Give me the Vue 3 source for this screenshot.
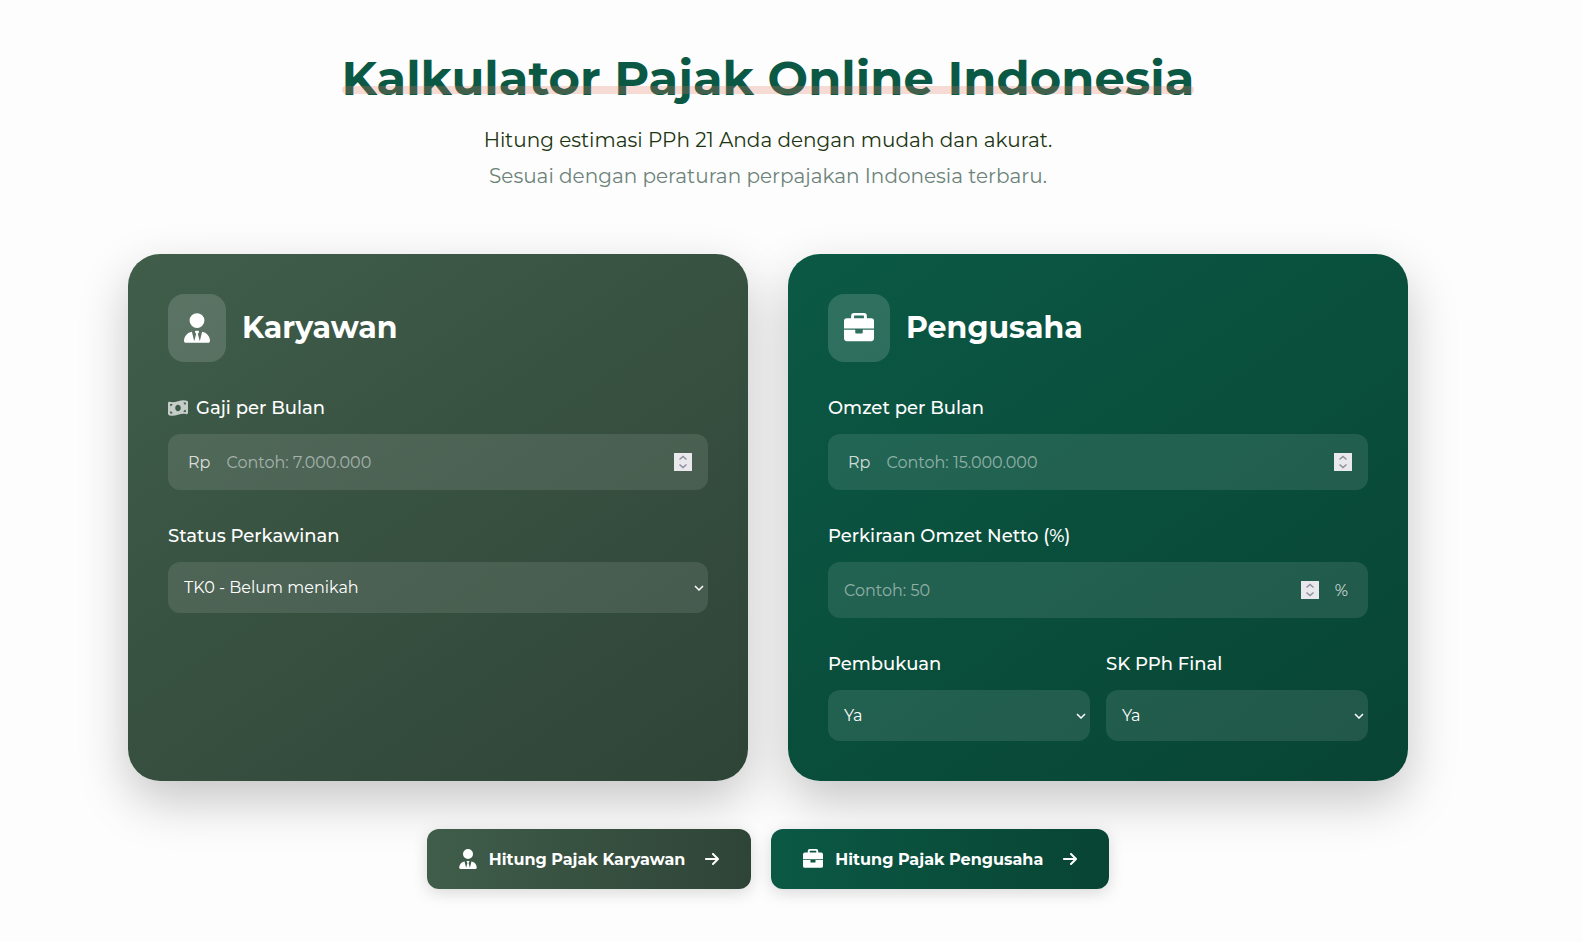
<script setup>
import { ref } from 'vue'

const salary = ref('')
const status = ref('TK0')
const revenue = ref('')
const netPercent = ref('')
const bookkeeping = ref('ya')
const finalLetter = ref('ya')

const statuses = [
  { value: 'TK0', label: 'TK0 - Belum menikah' },
  { value: 'K0', label: 'K0 - Menikah' },
]

const icons = {
  tie: {
    box: '0 0 448 512',
    d: 'M224 256A128 128 0 1 0 224 0a128 128 0 1 0 0 256zM209.1 359.2l-18.6-31c-6.4-10.7 1.3-24.2 13.7-24.2H224h19.7c12.4 0 20.1 13.6 13.7 24.2l-18.6 31 33.4 123.9 39.5-161.2c77.2 12 136.3 78.8 136.3 159.4c0 17-13.8 30.7-30.7 30.7H265.1 182.9 30.7C13.8 512 0 498.2 0 481.3c0-80.6 59.1-147.4 136.3-159.4l39.5 161.2 33.4-123.9z',
  },
  briefcase: {
    box: '0 0 512 512',
    d: 'M170 0H342a48 48 0 0 1 48 48V90H464a48 48 0 0 1 48 48V264H0V138a48 48 0 0 1 48-48H122V48a48 48 0 0 1 48-48zM180 42a8 8 0 0 0-8 8V90H340V50a8 8 0 0 0-8-8zM0 284H192V332a16 16 0 0 0 16 16H304a16 16 0 0 0 16-16V284H512V432a48 48 0 0 1-48 48H48a48 48 0 0 1-48-48z',
  },
  money: {
    box: '0 0 576 512',
    d: 'M0 112.5V422.3c0 18 10.1 35 27 41.3c87 32.5 174 10.3 261-11.9c79.8-20.3 159.6-40.7 239.3-18.9c23 6.3 48.7-9.5 48.7-33.4V89.7c0-18-10.1-35-27-41.3C462 15.9 375 38.1 288 60.3C208.2 80.6 128.4 100.9 48.7 79.1C25.6 72.8 0 88.6 0 112.5zM288 352c-44.2 0-80-43-80-96s35.8-96 80-96s80 43 80 96s-35.8 96-80 96zM64 352c35.3 0 64 28.7 64 64H64V352zm64-208c0 35.3-28.7 64-64 64V144h64zM512 304v64H448c0-35.3 28.7-64 64-64zM448 96h64v64c-35.3 0-64-28.7-64-64z',
  },
  arrow: {
    box: '0 0 448 512',
    d: 'M438.6 278.6c12.5-12.5 12.5-32.8 0-45.3l-160-160c-12.5-12.5-32.8-12.5-45.3 0s-12.5 32.8 0 45.3L338.8 224 32 224c-17.7 0-32 14.3-32 32s14.3 32 32 32l306.7 0L233.4 393.4c-12.5 12.5-12.5 32.8 0 45.3s32.8 12.5 45.3 0l160-160z',
  },
}

const step = (value, amount) => Math.max(0, Number(value || 0) + amount)
</script>

<template>
  <main class="page">
    <header class="intro">
      <h1><span class="marked">Kalkulator Pajak Online Indonesia</span></h1>
      <p class="lead">Hitung estimasi PPh 21 Anda dengan mudah dan akurat.</p>
      <p class="lead note">Sesuai dengan peraturan perpajakan Indonesia terbaru.</p>
    </header>

    <div class="cards">
      <section class="card employee">
        <div class="card-head">
          <span class="badge">
            <svg class="badge-icon tie" :viewBox="icons.tie.box" aria-hidden="true"><path :d="icons.tie.d" /></svg>
          </span>
          <h2>Karyawan</h2>
        </div>
        <div class="field">
          <label for="salary">
            <svg class="money" :viewBox="icons.money.box" aria-hidden="true"><path :d="icons.money.d" /></svg>
            Gaji per Bulan
          </label>
          <div class="box">
            <span class="unit">Rp</span>
            <input id="salary" v-model="salary" type="number" placeholder="Contoh: 7.000.000" />
            <span class="spinner">
              <button type="button" aria-label="Tambah gaji" @click="salary = step(salary, 1)">
                <svg viewBox="0 0 18 9"><path d="M5.5 6.5L9 3.5L12.5 6.5" /></svg>
              </button>
              <button type="button" aria-label="Kurangi gaji" @click="salary = step(salary, -1)">
                <svg viewBox="0 0 18 9"><path d="M5.5 2.5L9 5.5L12.5 2.5" /></svg>
              </button>
            </span>
          </div>
        </div>
        <div class="field">
          <label for="status">Status Perkawinan</label>
          <div class="choice">
            <select id="status" v-model="status">
              <option v-for="s in statuses" :key="s.value" :value="s.value">{{ s.label }}</option>
            </select>
            <svg class="caret" viewBox="0 0 10 6" aria-hidden="true"><path d="M1 1L5 5L9 1" /></svg>
          </div>
        </div>
      </section>

      <section class="card business">
        <div class="card-head">
          <span class="badge">
            <svg class="badge-icon" :viewBox="icons.briefcase.box" aria-hidden="true"><path :d="icons.briefcase.d" /></svg>
          </span>
          <h2>Pengusaha</h2>
        </div>
        <div class="field">
          <label for="revenue">Omzet per Bulan</label>
          <div class="box">
            <span class="unit">Rp</span>
            <input id="revenue" v-model="revenue" type="number" placeholder="Contoh: 15.000.000" />
            <span class="spinner">
              <button type="button" aria-label="Tambah omzet" @click="revenue = step(revenue, 1)">
                <svg viewBox="0 0 18 9"><path d="M5.5 6.5L9 3.5L12.5 6.5" /></svg>
              </button>
              <button type="button" aria-label="Kurangi omzet" @click="revenue = step(revenue, -1)">
                <svg viewBox="0 0 18 9"><path d="M5.5 2.5L9 5.5L12.5 2.5" /></svg>
              </button>
            </span>
          </div>
        </div>
        <div class="field">
          <label for="net">Perkiraan Omzet Netto (%)</label>
          <div class="box">
            <input id="net" v-model="netPercent" type="number" placeholder="Contoh: 50" />
            <span class="spinner">
              <button type="button" aria-label="Tambah persen" @click="netPercent = step(netPercent, 1)">
                <svg viewBox="0 0 18 9"><path d="M5.5 6.5L9 3.5L12.5 6.5" /></svg>
              </button>
              <button type="button" aria-label="Kurangi persen" @click="netPercent = step(netPercent, -1)">
                <svg viewBox="0 0 18 9"><path d="M5.5 2.5L9 5.5L12.5 2.5" /></svg>
              </button>
            </span>
            <span class="unit">%</span>
          </div>
        </div>
        <div class="pair">
          <div class="field">
            <label for="books">Pembukuan</label>
            <div class="choice">
              <select id="books" v-model="bookkeeping">
                <option value="ya">Ya</option>
                <option value="tidak">Tidak</option>
              </select>
              <svg class="caret" viewBox="0 0 10 6" aria-hidden="true"><path d="M1 1L5 5L9 1" /></svg>
            </div>
          </div>
          <div class="field">
            <label for="final">SK PPh Final</label>
            <div class="choice">
              <select id="final" v-model="finalLetter">
                <option value="ya">Ya</option>
                <option value="tidak">Tidak</option>
              </select>
              <svg class="caret" viewBox="0 0 10 6" aria-hidden="true"><path d="M1 1L5 5L9 1" /></svg>
            </div>
          </div>
        </div>
      </section>
    </div>

    <div class="actions">
      <button type="button" class="action employee">
        <svg class="action-icon tie" :viewBox="icons.tie.box" aria-hidden="true"><path :d="icons.tie.d" /></svg>
        <span>Hitung Pajak Karyawan</span>
        <svg class="arrow" :viewBox="icons.arrow.box" aria-hidden="true"><path :d="icons.arrow.d" /></svg>
      </button>
      <button type="button" class="action business">
        <svg class="action-icon" :viewBox="icons.briefcase.box" aria-hidden="true"><path :d="icons.briefcase.d" /></svg>
        <span>Hitung Pajak Pengusaha</span>
        <svg class="arrow" :viewBox="icons.arrow.box" aria-hidden="true"><path :d="icons.arrow.d" /></svg>
      </button>
    </div>
  </main>
</template>

<style>
body {
  background: #fdfdfd;
}
</style>

<style scoped>
.page {
  box-sizing: border-box;
  max-width: 1536px;
  padding: 48px 128px;
  font-family: Montserrat, Inter, "Open Sans", sans-serif;
  font-size: 16px;
  color: #fff;
}
.page * {
  box-sizing: border-box;
}
h1,
h2,
p {
  margin: 0;
}
svg {
  display: block;
  flex: none;
  fill: currentColor;
}
.intro {
  text-align: center;
  margin-bottom: 60px;
}
h1 {
  margin-bottom: 14px;
  font-size: 48px;
  line-height: 60px;
  font-weight: 700;
  color: #0b5945;
}
.marked {
  display: inline-block;
  position: relative;
}
.marked::after {
  content: "";
  position: absolute;
  left: 0;
  right: 0;
  bottom: 14px;
  height: 8px;
  border-radius: 4px;
  background: rgba(226, 114, 91, 0.25);
}
.lead {
  font-size: 20px;
  line-height: 36px;
  color: #1c3512;
}
.note {
  color: #6c8379;
}
.cards {
  display: grid;
  grid-template-columns: 1fr 1fr;
  gap: 40px;
}
.card {
  display: flex;
  flex-direction: column;
  gap: 32px;
  padding: 40px;
  border-radius: 32px;
  box-shadow: 0 20px 50px rgba(0, 0, 0, 0.22);
}
.card.employee {
  background: linear-gradient(145deg, #405d4a, #2e4437);
}
.card.business {
  background: linear-gradient(145deg, #0b5945, #084433);
}
.card-head {
  display: flex;
  align-items: center;
  gap: 16px;
}
.badge {
  display: flex;
  align-items: center;
  height: 68px;
  padding: 0 16px;
  border-radius: 16px;
  background: rgba(255, 255, 255, 0.15);
}
.badge-icon {
  width: 30px;
  height: 30px;
}
.badge-icon.tie {
  width: 26px;
}
h2 {
  font-size: 30px;
  line-height: 36px;
  font-weight: 700;
}
.field {
  display: flex;
  flex-direction: column;
  gap: 12px;
}
label {
  display: flex;
  align-items: center;
  gap: 8px;
  font-size: 18px;
  line-height: 28px;
  font-weight: 500;
}
.money {
  width: 20px;
  height: 18px;
  opacity: 0.7;
}
.box {
  display: flex;
  align-items: center;
  height: 56px;
  padding: 0 16px;
  border-radius: 12px;
  background: rgba(255, 255, 255, 0.1);
}
.unit {
  padding: 0 4px;
  color: rgba(255, 255, 255, 0.8);
}
.unit:first-child {
  margin-right: 12px;
}
.unit:last-child {
  margin-left: 12px;
}
input {
  flex: 1;
  min-width: 0;
  padding: 0;
  border: 0;
  outline: 0;
  background: none;
  font: inherit;
  color: #fff;
  appearance: textfield;
}
input::-webkit-inner-spin-button {
  display: none;
}
input::placeholder {
  color: rgba(255, 255, 255, 0.5);
}
.spinner {
  display: flex;
  flex-direction: column;
  background: #e8e8ed;
}
.spinner button {
  padding: 0;
  border: 0;
  background: none;
  color: #8f8f9d;
}
.spinner svg {
  width: 18px;
  height: 9px;
}
.spinner path,
.caret path {
  fill: none;
  stroke: currentColor;
  stroke-width: 1.5;
}
.choice {
  position: relative;
}
select {
  display: block;
  width: 100%;
  height: 51px;
  padding: 0 16px;
  border: 0;
  border-radius: 12px;
  appearance: none;
  background: rgba(255, 255, 255, 0.1);
  font: inherit;
  color: #fff;
}
option {
  color: #1c3512;
}
.caret {
  position: absolute;
  top: 23px;
  right: 4px;
  width: 10px;
  height: 6px;
  pointer-events: none;
}
.pair {
  display: grid;
  grid-template-columns: 1fr 1fr;
  gap: 16px;
}
.actions {
  display: flex;
  justify-content: center;
  gap: 20px;
  margin-top: 48px;
}
.action {
  position: relative;
  display: flex;
  align-items: center;
  height: 60px;
  padding: 0 32px;
  border: 0;
  border-radius: 12px;
  box-shadow: 0 4px 16px rgba(0, 0, 0, 0.15);
  font: inherit;
  font-weight: 700;
  color: #fff;
}
.action.employee {
  background: linear-gradient(90deg, #405d4a, #2e4437);
}
.action.business {
  background: linear-gradient(90deg, #0b5945, #084433);
}
.action-icon {
  width: 20px;
  height: 20px;
  margin-right: 12px;
}
.action-icon.tie {
  width: 18px;
}
.arrow {
  width: 14px;
  height: 16px;
  margin-left: 20px;
}
</style>
